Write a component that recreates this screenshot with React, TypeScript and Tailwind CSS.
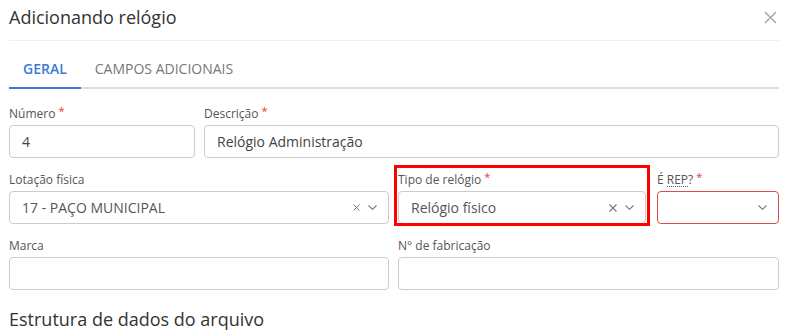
import { ReactNode } from "react";

function Req() {
  return <span className="ml-[3px] relative -top-[4px] text-[11px] text-[#e53935] leading-none">*</span>;
}

function Label({ children, required }: { children: ReactNode; required?: boolean }) {
  return (
    <div className="h-4 mb-[3px] flex items-center text-[12px] leading-4 text-[#555]">
      {children}
      {required && <Req />}
    </div>
  );
}

function XIcon({ size = 7 }: { size?: number }) {
  return (
    <svg width={size} height={size} viewBox="0 0 8 8" fill="none">
      <path d="M0.5 0.5 L7.5 7.5 M7.5 0.5 L0.5 7.5" stroke="#777" strokeWidth="1.1" />
    </svg>
  );
}

function Chevron() {
  return (
    <svg width="9" height="5" viewBox="0 0 9 5" fill="none">
      <path d="M0.5 0.5 L4.5 4.3 L8.5 0.5" stroke="#777" strokeWidth="1.1" />
    </svg>
  );
}

function TextBox({ value }: { value?: string }) {
  return (
    <div className="h-[33px] border border-[#ccc] rounded-[4px] bg-white px-[12px] flex items-center text-[14px] text-[#444]">
      {value}
    </div>
  );
}

function SelectBox({ value, clearable, error, xSize }: { value?: string; clearable?: boolean; error?: boolean; xSize?: number }) {
  return (
    <div
      className={
        "h-[33px] border rounded-[4px] bg-white pl-[12px] pr-[11px] flex items-center text-[14px] text-[#555] " +
        (error ? "border-[#dc4c4c]" : "border-[#ccc]")
      }
    >
      <span className="flex-1 truncate">{value}</span>
      {clearable && (
        <span className="mr-[8px] flex items-center">
          <XIcon size={xSize} />
        </span>
      )}
      <Chevron />
    </div>
  );
}

export default function App() {
  return (
    <div className="w-[787px] h-[334px] bg-white overflow-hidden" style={{ fontFamily: "'Open Sans', sans-serif" }}>
      {/* Header */}
      <div className="h-[41px] mx-[9px] mr-[8px] border-b border-[#efefef] flex items-center justify-between pb-[6px]">
        <h1 className="text-[18px] text-[#333] font-normal leading-6">Adicionando relógio</h1>
        <svg width="13" height="13" viewBox="0 0 13 13" fill="none" className="mr-[2px]">
          <path d="M1 1 L12 12 M12 1 L1 12" stroke="#aaa" strokeWidth="1.6" />
        </svg>
      </div>

      {/* Tabs */}
      <div className="mx-[9px] mr-[8px] mt-[9px] flex border-b-2 border-[#ddd]">
        <div className="relative h-[37px] px-[14px] flex items-center text-[14px] font-semibold text-[#3b7bd8]">
          GERAL
          <div className="absolute left-0 right-0 -bottom-[2px] h-[2px] bg-[#3a78d8]" />
        </div>
        <div className="h-[37px] px-[14px] flex items-center text-[14px] text-[#777]">CAMPOS ADICIONAIS</div>
      </div>

      {/* Form */}
      <div className="mx-[9px] mr-[8px] mt-[17px] flex flex-col gap-[14px]">
        <div className="flex gap-[9px]">
          <div className="w-[186px]">
            <Label required>Número</Label>
            <TextBox value="4" />
          </div>
          <div className="flex-1">
            <Label required>Descrição</Label>
            <TextBox value="Relógio Administração" />
          </div>
        </div>

        <div className="grid grid-cols-[380px_1fr] gap-[9px]">
          <div>
            <Label>Lotação física</Label>
            <SelectBox value="17 - PAÇO MUNICIPAL" clearable />
          </div>
          <div className="flex gap-[11px]">
            <div className="relative w-[248px]">
              <Label required>Tipo de relógio</Label>
              <SelectBox value="Relógio físico" clearable xSize={8} />
              <div className="absolute -left-[4px] -right-[4px] -top-[7px] -bottom-[2px] border-[3px] border-[#f00] pointer-events-none" />
            </div>
            <div className="flex-1">
              <Label required>
                É&nbsp;<span className="border-b border-dotted border-[#555] leading-[13px]">REP</span>?
              </Label>
              <SelectBox error />
            </div>
          </div>
        </div>

        <div className="grid grid-cols-[380px_1fr] gap-[9px]">
          <div>
            <Label>Marca</Label>
            <TextBox />
          </div>
          <div>
            <Label>N° de fabricação</Label>
            <TextBox />
          </div>
        </div>
      </div>

      <h2 className="mx-[9px] mt-[17px] text-[18px] leading-6 text-[#333] font-normal">Estrutura de dados do arquivo</h2>
    </div>
  );
}
